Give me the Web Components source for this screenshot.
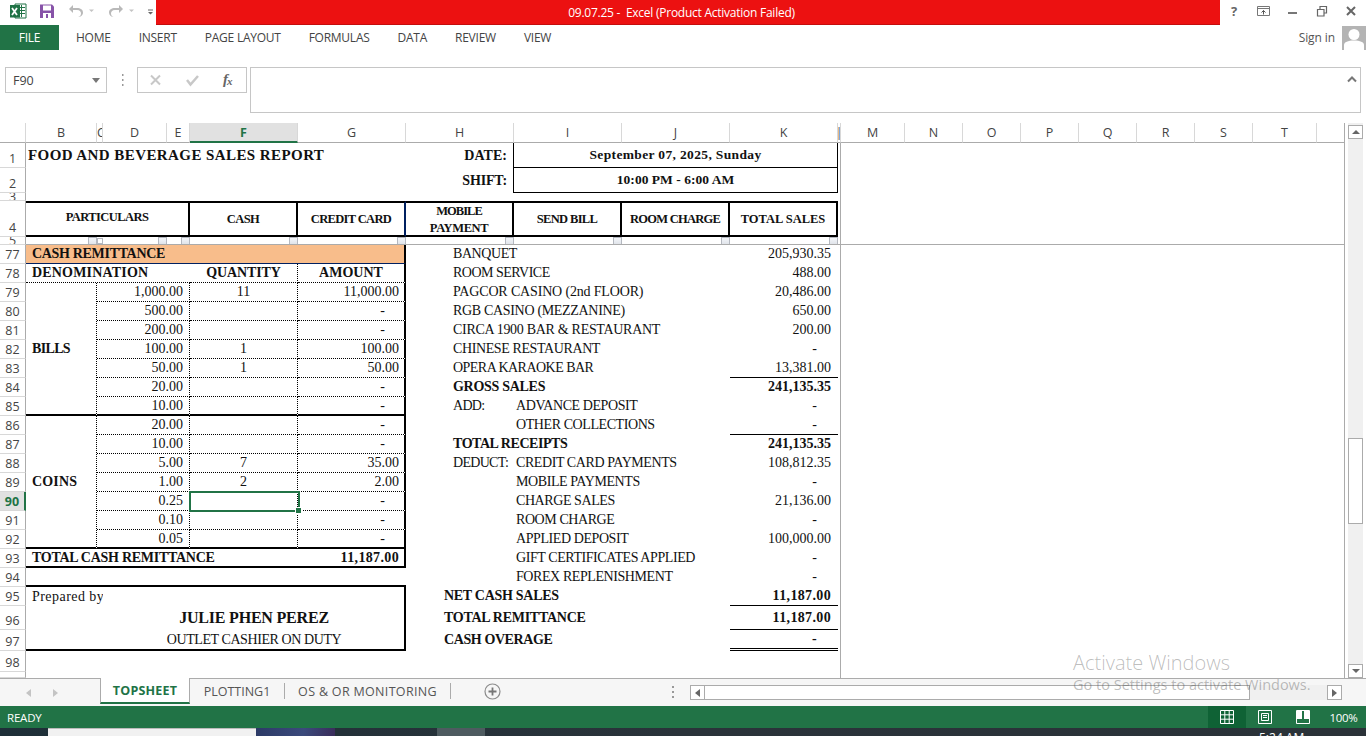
<!DOCTYPE html>
<html>
<head>
<meta charset="utf-8">
<title>09.07.25 - Excel</title>
<style>
  html, body { margin: 0; padding: 0; height: 736px; overflow: hidden; background: #fff; }
  body { display: flex; flex-direction: column; position: relative; font-family: "Open Sans", sans-serif; }
  .sheet-row { display: flex; height: 555px; }
</style>
</head>
<body>
<xl-titlebar title-text="09.07.25 -  Excel (Product Activation Failed)"></xl-titlebar>
<xl-ribbon-tabs></xl-ribbon-tabs>
<xl-formula-bar cell="F90"></xl-formula-bar>
<div class="sheet-row">
  <xl-sheet></xl-sheet>
  <xl-vscroll></xl-vscroll>
</div>
<xl-sheet-tabs></xl-sheet-tabs>
<xl-statusbar></xl-statusbar>
<xl-taskbar></xl-taskbar>
<xl-watermark></xl-watermark>

<script>
const titlebarTemplate = (props) => `
  <style>
    :host { display: flex; height: 25px; flex: none; color: #666; }
    .qat { width: 156px; display: flex; align-items: flex-start; flex: none; }
    .qat svg { display: block; position: relative; }
    .red {
      flex: 1;
      background: #ec1111;
      border-bottom: 1px solid #c40d0d;
      color: #fff;
      font: 12px "Open Sans", sans-serif;
      letter-spacing: -0.25px;
      white-space: pre;
      display: flex;
      align-items: center;
      justify-content: center;
      padding-right: 13px;
    }
    .controls { width: 146px; flex: none; display: flex; }
    .controls svg { display: block; }
  </style>
  <div class="qat">
    <svg width="156" height="25" viewBox="0 0 156 25">
      <path d="M15 4h11v14H15z" fill="#fff" stroke="#217346"/>
      <path d="M19 7.5h6M19 10.500h6M19 13.500h6M21.500 5v12" stroke="#217346" fill="none"/>
      <rect x="10" y="5" width="10" height="12.500" fill="#217346"/>
      <path d="M12 8l5 7M17 8l-5 7" stroke="#fff" stroke-width="1.800" fill="none"/>
      <path d="M40 4.500h12l2 2v11.500H40z" fill="#8753a8"/>
      <rect x="43" y="5.500" width="8" height="5" fill="#fff"/>
      <rect x="43" y="13" width="8" height="5" fill="#fff"/>
      <rect x="46" y="14" width="2" height="4" fill="#8753a8"/>
      <path d="M73 5l-4 4 4 4v-3h4c3 0 4 2 4 3.500 0 2-1.500 3.500-3 3.500 3 0 5-2 5-4.500C83 9.500 80.500 8 77 8h-4z" fill="#b9b9b9"/>
      <path d="M89 9.500h5l-2.500 2.500z" fill="#c4c4c4"/>
      <path d="M119 5l4 4-4 4v-3h-4c-3 0-4 2-4 3.500 0 2 1.500 3.500 3 3.500-3 0-5-2-5-4.500 0-3 2.500-4.500 6-4.500h4z" fill="#b9b9b9"/>
      <path d="M129 9.500h5l-2.500 2.500z" fill="#c4c4c4"/>
      <path d="M148 9.500h5v1h-5zM148 12h5l-2.500 2.500z" fill="#666"/>
    </svg>
  </div>
  <div class="red">${props.titleText}</div>
  <div class="controls">
    <svg width="146" height="25" viewBox="0 0 146 25">
      <text x="11" y="16" font-family="Open Sans, sans-serif" font-weight="700" font-size="13" fill="#666">?</text>
      <path d="M37.500 6.500h12v9h-12zM37.500 8.500h12" fill="none" stroke="#777"/>
      <path d="M43.500 14.500v-4M41.500 12.500l2-2 2 2" fill="none" stroke="#555"/>
      <rect x="68" y="12" width="9" height="2" fill="#777"/>
      <path d="M97.500 9.500h6.500v6.500h-6.500zM100 9V6.500h6.500V13H104" fill="none" stroke="#666" stroke-width="1.200"/>
      <path d="M127 7l8 8M135 7l-8 8" stroke="#666" stroke-width="2" fill="none"/>
    </svg>
  </div>`;

customElements.define(
  "xl-titlebar",
  class XlTitlebar extends HTMLElement {
    constructor() {
      super();
      this.shadow = this.attachShadow({ mode: "open" });
    }
    connectedCallback() {
      this.shadow.innerHTML = titlebarTemplate({ titleText: this.getAttribute("title-text") });
    }
  }
);

customElements.define(
  "xl-ribbon-tabs",
  class XlRibbonTabs extends HTMLElement {
    constructor() {
      super();
      this.attachShadow({ mode: "open" }).innerHTML = `
        <style>
          :host { display: flex; height: 25px; flex: none; align-items: stretch;
                  font: 12px "Open Sans", sans-serif; letter-spacing: -0.25px; color: #444; }
          .file { width: 59px; background: #217346; color: #fff; display: flex; align-items: center; justify-content: center; }
          .tabs { display: flex; gap: 28px; padding-left: 17px; align-items: center; flex: 1; }
          .sign { display: flex; align-items: center; gap: 7px; color: #555; letter-spacing: -0.1px; padding-bottom: 1px; }
          svg { display: block; margin-bottom: -1px; }
        </style>
        <div class="file">FILE</div>
        <div class="tabs">
          <span>HOME</span><span>INSERT</span><span>PAGE LAYOUT</span><span>FORMULAS</span><span>DATA</span><span>REVIEW</span><span>VIEW</span>
        </div>
        <div class="sign">
          <span>Sign in</span>
          <svg width="24" height="24" viewBox="0 0 24 24">
            <rect width="24" height="24" fill="#b4b4b4"/>
            <circle cx="12" cy="8.500" r="5.500" fill="#fff"/>
            <path d="M2 24v-5c0-3 4-4.500 10-4.500s10 1.500 10 4.500v5z" fill="#fff"/>
          </svg>
        </div>`;
    }
  }
);

customElements.define(
  "xl-formula-bar",
  class XlFormulaBar extends HTMLElement {
    constructor() {
      super();
      this.shadow = this.attachShadow({ mode: "open" });
    }
    connectedCallback() {
      this.shadow.innerHTML = `
        <style>
          :host { display: flex; height: 73px; flex: none; box-sizing: border-box; padding: 17px 5px 10px 5px; align-items: flex-start; }
          .box { box-sizing: border-box; border: 1px solid #c6c6c6; background: #fff; }
          .name { width: 102px; height: 26px; display: flex; align-items: center; justify-content: space-between;
                  padding: 0 6px 0 7px; font: 12.500px "Open Sans", sans-serif; color: #444; }
          .caret { width: 0; height: 0; border: 4px solid transparent; border-top: 5px solid #777; border-bottom: 0; }
          .dots { width: 30px; display: flex; justify-content: center; padding-top: 7px; }
          .fx { width: 110px; height: 26px; }
          .fx svg { display: block; }
          .fx text { font-family: "Liberation Serif", serif; font-style: italic; font-weight: 700; font-size: 15px; fill: #666; }
          .input { width: 1111px; height: 46px; margin-left: 3px; position: relative; }
          .input svg { position: absolute; right: 3px; top: 8px; display: block; }
        </style>
        <div class="box name"><span>${this.getAttribute("cell")}</span><i class="caret"></i></div>
        <div class="dots">
          <svg width="3" height="13"><path d="M1 0h1.500v2H1zM1 5h1.500v2H1zM1 10h1.500v2H1z" fill="#999"/></svg>
        </div>
        <div class="box fx">
          <svg width="108" height="24" viewBox="0 0 108 24">
            <path d="M13 7.500l9 9M22 7.500l-9 9" stroke="#c8c8c8" stroke-width="2" fill="none"/>
            <path d="M49 12l3.500 4.500L60 8" stroke="#c8c8c8" stroke-width="2.500" fill="none"/>
            <text x="85" y="16">f</text><text x="89" y="17" style="font-size:11px">x</text>
          </svg>
        </div>
        <div class="box input">
          <svg width="10" height="7" viewBox="0 0 10 7"><path d="M1 5.500l4-4 4 4" stroke="#777" stroke-width="2" fill="none"/></svg>
        </div>`;
    }
  }
);

// column edges of the grid, row header first, then B to U
const COLS = [26, 71, 6, 64, 23, 108, 108, 108, 108, 108, 108, 3, 64, 58, 58, 58, 58, 58, 58, 64, 28];
const COL_NAMES = ["", "B", "C", "D", "E", "F", "G", "H", "I", "J", "K", "", "M", "N", "O", "P", "Q", "R", "S", "T", ""];
const ROWS = [20, 25, 25, 8, 36, 8].concat(Array(19).fill(19), [24, 21, 21, 6]);
const ROW_NAMES = ["", 1, 2, 3, 4, 5];
for (let r = 77; r <= 99; r++) ROW_NAMES.push(r);

// grid line of a sheet row / column letter
const rowLine = (n) => ROW_NAMES.indexOf(n) + 1;
const colLine = (name) => COL_NAMES.indexOf(name) + 1;

const cell = (from, to, row, cls, text = "", rowTo = row) =>
  `<div class="c ${cls}" style="grid-column:${colLine(from)}/${colLine(to) + 1};grid-row:${rowLine(row)}/${rowLine(rowTo) + 1}">${text}</div>`;

// the reference font is wider or narrower per word, so spacing is set per label
const ls = (text, v) => `<span style="letter-spacing:${v}px">${text}</span>`;

function buildCells() {
  let html = "";

  // headers
  COL_NAMES.forEach((name, i) => {
    const sel = name === "F" ? " sel" : "";
    const clip = name === "C" ? " clip" : "";
    let label = name;
    if (i === 11) label = '<span class="l">|</span>';
    html += `<div class="ch${sel}${clip}" style="grid-column:${i + 1}">${label}</div>`;
  });
  ROW_NAMES.slice(1).forEach((name, i) => {
    const sel = name === 90 ? " sel" : "";
    const tiny = name === 3 || name === 5 ? " tiny" : "";
    const label = name === 99 ? "" : name;
    html += `<div class="rh${sel}${tiny}" style="grid-row:${i + 2}"><span>${label}</span></div>`;
  });

  // top block
  html += cell("B", "G", 1, "title", "FOOD AND BEVERAGE SALES REPORT");
  html += cell("H", "H", 1, "bold right lbl", ls("DATE:", 0.05));
  html += cell("H", "H", 2, "bold right lbl", ls("SHIFT:", -0.15));
  html += cell("I", "K", 1, "bold center datebox", "September 07, 2025, Sunday");
  html += cell("I", "K", 2, "bold center datebox", ls("10:00 PM - 6:00 AM", 0.02));

  // table header
  html += cell("B", "E", 4, "th up", ls("PARTICULARS", -0.58));
  html += cell("F", "F", 4, "th", ls("CASH", -0.6));
  html += cell("G", "G", 4, "th navy", ls("CREDIT CARD", -0.65));
  html += cell("H", "H", 4, "th two", `${ls("MOBILE", -0.95)}${ls("PAYMENT", -0.4)}`);
  html += cell("I", "I", 4, "th", ls("SEND BILL", -0.65));
  html += cell("J", "J", 4, "th", ls("ROOM CHARGE", -0.75));
  html += cell("K", "K", 4, "th", ls("TOTAL SALES", 0));

  // little filter boxes under the header
  ["B", "D", "E", "F", "G", "H", "I", "J", "K"].forEach((col) => {
    html += cell(col, col, 5, "flt");
  });
  html += cell("C", "C", 5, "flt small");

  // remittance
  html += cell("B", "G", 77, "bold peach", ls("CASH REMITTANCE", -0.32));
  html += cell("B", "E", 78, "bold head dot", ls("DENOMINATION", 0.18));
  html += cell("F", "F", 78, "bold head center dot vdot", ls("QUANTITY", -0.15));
  html += cell("G", "G", 78, "bold head center dot edge", ls("AMOUNT", 0));
  html += cell("B", "B", 79, "bold merged thick vdot", ls("BILLS", -0.65), 85);
  html += cell("B", "B", 86, "bold merged thick vdot", ls("COINS", 0.15), 92);

  const money = [
    [79, "1,000.00", "11", "11,000.00"], [80, "500.00", "", "-"], [81, "200.00", "", "-"],
    [82, "100.00", "1", "100.00"], [83, "50.00", "1", "50.00"], [84, "20.00", "", "-"],
    [85, "10.00", "", "-"], [86, "20.00", "", "-"], [87, "10.00", "", "-"],
    [88, "5.00", "7", "35.00"], [89, "1.00", "2", "2.00"], [90, "0.25", "", "-"],
    [91, "0.10", "", "-"], [92, "0.05", "", "-"],
  ];
  money.forEach(([row, denom, qty, amt]) => {
    const b = row === 85 || row === 92 ? "thick" : "dot";
    const dash = amt === "-" ? " dash" : "";
    html += cell("C", "E", row, `right vdot ${b}`, denom);
    html += cell("F", "F", row, `center vdot ${b}`, qty);
    html += cell("G", "G", row, `right edge ${b}${dash}`, amt);
  });
  html += cell("F", "F", 90, "cursor");

  html += cell("B", "F", 93, "bold thick tot", ls("TOTAL CASH REMITTANCE", -0.27));
  html += cell("G", "G", 93, "bold right edge thick", "11,187.00");
  html += cell("B", "G", 94, "thick");
  html += cell("B", "G", 95, "edge prep", "<span>Prepared by</span>");
  html += cell("B", "G", 96, "edge center name", "JULIE PHEN PEREZ");
  html += cell("B", "G", 97, "edge center thick outlet", "OUTLET CASHIER ON DUTY");

  // right hand summary: [row, label, value, extra class]
  const summary = [
    [77, ls("BANQUET", -0.42), "205,930.35"], [78, ls("ROOM SERVICE", -0.5), "488.00"],
    [79, ls("PAGCOR CASINO (2nd FLOOR)", -0.16), "20,486.00"],
    [80, ls("RGB CASINO (MEZZANINE)", -0.32), "650.00"], [81, ls("CIRCA 1900 BAR &amp; RESTAURANT", -0.3), "200.00"],
    [82, ls("CHINESE RESTAURANT", -0.39), "-"], [83, ls("OPERA KARAOKE BAR", -0.53), "13,381.00", "line"],
    [84, `<b style="letter-spacing:-0.29px">GROSS SALES</b>`, "<b>241,135.35</b>"],
    [86, "", "-", "line"],
    [87, `<b style="letter-spacing:-0.44px">TOTAL RECEIPTS</b>`, "<b>241,135.35</b>"],
  ];
  summary.forEach(([row, label, val, cls = ""]) => {
    if (label) html += cell("H", "J", row, "sum", label);
    html += cell("K", "K", row, `right val ${cls}${val === "-" ? " dash" : ""}`, val);
  });

  html += cell("H", "H", 85, "sum", ls("ADD:", -0.7));
  html += cell("K", "K", 85, "right val dash", "-");
  html += cell("H", "H", 88, "sum", ls("DEDUCT:", -0.7));

  const sub = [
    [85, "ADVANCE DEPOSIT"], [86, "OTHER COLLECTIONS"], [88, "CREDIT CARD PAYMENTS", "108,812.35"],
    [89, "MOBILE PAYMENTS", "-"], [90, "CHARGE SALES", "21,136.00"], [91, "ROOM CHARGE", "-"],
    [92, "APPLIED DEPOSIT", "100,000.00"], [93, "GIFT CERTIFICATES APPLIED", "-"], [94, "FOREX REPLENISHMENT", "-"],
  ];
  sub.forEach(([row, label, val]) => {
    html += cell("I", "J", row, "sub", label);
    if (val) html += cell("K", "K", row, `right val${val === "-" ? " dash" : ""}`, val);
  });

  html += cell("H", "J", 95, "net bold", ls("NET CASH SALES", -0.29));
  html += cell("K", "K", 95, "right val bold line", "11,187.00");
  html += cell("H", "J", 96, "net bold", ls("TOTAL REMITTANCE", -0.27));
  html += cell("K", "K", 96, "right val bold line", "11,187.00");
  html += cell("H", "J", 97, "net bold", ls("CASH OVERAGE", -0.4));
  html += cell("K", "K", 97, "right val bold dbl dash", "-");

  // freeze pane lines
  html += `<div class="freeze-v" style="grid-column:${colLine("K") + 1};grid-row:2/-1"></div>`;
  html += `<div class="freeze-h" style="grid-column:2/-1;grid-row:6"></div>`;
  return html;
}

customElements.define(
  "xl-sheet",
  class XlSheet extends HTMLElement {
    constructor() {
      super();
      this.attachShadow({ mode: "open" }).innerHTML = `
        <style>
          :host { display: block; width: 1345px; height: 555px; flex: none; overflow: hidden; box-sizing: border-box; border-right: 1px solid #ababab; }
          .grid {
            display: grid;
            grid-template-columns: ${COLS.map((w) => w + "px").join(" ")};
            grid-template-rows: ${ROWS.map((h) => h + "px").join(" ")};
            font: 14px "Liberation Serif", serif;
            color: #111;
          }
          .ch {
            grid-row: 1; box-sizing: border-box; border-right: 1px solid #d8d8d8; border-bottom: 1px solid #ababab;
            display: flex; align-items: center; justify-content: center; overflow: hidden;
            font: 12.500px "Open Sans", sans-serif; color: #444;
          }
          .ch.clip { justify-content: flex-start; }
          .ch.sel { background: #e1e1e1; border-bottom: 2px solid #217346; color: #217346; font-weight: 700; }
          .ch .l { color: #444; font-size: 12px; }
          .rh {
            grid-column: 1; box-sizing: border-box; border-right: 1px solid #ababab; border-bottom: 1px solid #d8d8d8;
            display: flex; align-items: flex-end; justify-content: center; overflow: hidden;
            font: 12.500px "Open Sans", sans-serif; color: #444; line-height: 17px;
          }
          .rh.tiny { line-height: 7px; }
          .rh.sel { background: #e1e1e1; color: #217346; font-weight: 700; border-right: 2px solid #217346; }
          .c { box-sizing: border-box; display: flex; align-items: center; min-width: 0; white-space: nowrap; padding: 0 6px; }
          .bold { font-weight: 700; letter-spacing: 0.35px; }
          .right { justify-content: flex-end; }
          .center { justify-content: center; }
          .title { font-weight: 700; font-size: 15px; padding-left: 2px; letter-spacing: 0.42px; padding-bottom: 1px; }
          .lbl { padding-right: 7px; }
          .datebox { border: solid #000; border-width: 0 1px 1px 1px; font-size: 13.500px; padding-bottom: 1px; margin-left: -1px; }
          .th { grid-row: 5; border: solid #000; border-width: 2px 2px 2px 0; justify-content: center; font-weight: 700; font-size: 12.500px; padding: 0; }
          .th.up { padding-bottom: 4px; }
          .th.navy { border-right-color: #002060; }
          .th.two { flex-direction: column; justify-content: space-between; align-items: center; line-height: 17px; }
          .flt { justify-self: end; width: 9px; padding: 0; border: 1px solid #b4b8c0; background: linear-gradient(#f4f6fa, #e0e4ea); height: 8px; }
          .flt.small { background: #fff; width: 6px; height: 6px; align-self: end; margin-bottom: 1px; justify-self: start; }
          .peach { background: #f8bd8b; border-bottom: 1px solid #002060; border-right: 2px solid #000; }
          .dot { border-bottom: 1px dotted #000; }
          .vdot { border-right: 1px dotted #000; }
          .edge { border-right: 2px solid #000; }
          .thick { border-bottom: 2px solid #000; }
          .prep span { display: block; width: 71px; overflow: hidden; letter-spacing: 0.45px; }
          .name { font-weight: 700; font-size: 16px; padding: 0 0 0 78px; letter-spacing: -0.2px; }
          .outlet { padding: 0 0 0 78px; letter-spacing: -0.42px; }
          .edge.right { padding-right: 5px; }
          .edge.right.dash { padding-right: 19px; }
          .cursor { border: 2px solid #217346; margin: -1px -2px -1px -1px; position: relative; padding: 0; z-index: 2; }
          .cursor::after { content: ""; position: absolute; right: -3px; bottom: -3px; background: #217346; box-shadow: 0 0 0 1px #fff; width: 5px; height: 5px; }
          .sum { padding-left: 47px; padding-bottom: 1px; letter-spacing: -0.42px; }
          .sub { padding-left: 2px; padding-bottom: 1px; letter-spacing: -0.42px; }
          .net { padding-left: 38px; padding-bottom: 1px; }
          .val { padding-right: 7px; padding-bottom: 1px; }
          .val.line { padding-bottom: 0; }
          .val.dash { padding-right: 21px; }
          .line { border-bottom: 1px solid #000; }
          .dbl { border-bottom: 3px double #000; padding-bottom: 0; }
          .freeze-v { border-right: 1px solid #ababab; }
          .freeze-h { border-bottom: 1px solid #ababab; }
        </style>
        <div class="grid">${buildCells()}</div>`;
    }
  }
);

customElements.define(
  "xl-vscroll",
  class XlVscroll extends HTMLElement {
    constructor() {
      super();
      this.attachShadow({ mode: "open" }).innerHTML = `
        <style>
          :host { display: flex; flex-direction: column; width: 15px; height: 555px; margin-left: 3px; flex: none; background: #f0f0f0; }
          .btn { height: 14px; flex: none; box-sizing: border-box; border: 1px solid #ababab; background: #fff; display: flex; align-items: center; justify-content: center; }
          .top { margin-top: 2px; }
          .track { height: 299px; flex: none; }
          .thumb { height: 86px; flex: none; box-sizing: border-box; border: 1px solid #ababab; background: #fff; }
          .rest { flex: 1; }
          i { width: 0; height: 0; border: 4px solid transparent; }
          .up i { border-bottom: 4px solid #666; border-top: 0; }
          .down i { border-top: 4px solid #666; border-bottom: 0; }
        </style>
        <div class="btn top up"><i></i></div>
        <div class="track"></div>
        <div class="thumb"></div>
        <div class="rest"></div>
        <div class="btn down"><i></i></div>`;
    }
  }
);

customElements.define(
  "xl-sheet-tabs",
  class XlSheetTabs extends HTMLElement {
    constructor() {
      super();
      this.attachShadow({ mode: "open" }).innerHTML = `
        <style>
          :host { display: flex; height: 28px; flex: none; box-sizing: border-box; background: #f6f6f6; border-top: 1px solid #ababab;
                  font: 12.500px "Open Sans", sans-serif; color: #555; align-items: stretch; }
          .nav { width: 100px; display: flex; gap: 22px; align-items: center; padding-left: 26px; box-sizing: border-box; flex: none; }
          .nav i { width: 0; height: 0; border: 4px solid transparent; }
          .nav i:first-child { border-right: 5px solid #c4c4c4; border-left: 0; }
          .nav i:last-child { border-left: 5px solid #c4c4c4; border-right: 0; }
          .active { width: 90px; flex: none; box-sizing: border-box; background: #fff; border: solid #ababab; border-width: 0 1px; margin-top: -1px;
                    border-bottom: 2px solid #217346; margin-bottom: 2px; color: #217346; font-weight: 700; letter-spacing: 0.2px; display: flex; align-items: center; justify-content: center; }
          .tab { display: flex; align-items: center; justify-content: center; box-sizing: border-box; flex: none; border-right: 1px solid #ababab; margin: 4px 0 7px; }
          .t1 { width: 95px; }
          .t2 { width: 166px; letter-spacing: 0.32px; }
          .plus { width: 83px; flex: none; display: flex; align-items: center; justify-content: center; padding-bottom: 2px; box-sizing: border-box; }
          .dots { width: 156px; flex: none; display: flex; align-items: center; justify-content: flex-end; padding-right: 15px; box-sizing: border-box; padding-bottom: 2px; }
          .hbar { display: flex; flex: none; width: 652px; height: 15px; margin-top: 6px; }
          .hbtn { width: 15px; box-sizing: border-box; border: 1px solid #ababab; background: #fff; display: flex; align-items: center; justify-content: center; flex: none; }
          .hbtn i { width: 0; height: 0; border: 4px solid transparent; }
          .l i { border-right: 5px solid #666; border-left: 0; }
          .r i { border-left: 5px solid #666; border-right: 0; }
          .thumb { width: 545px; flex: none; box-sizing: border-box; border: 1px solid #ababab; border-left: 0; background: #fff; }
          .hrest { width: 77px; flex: none; background: #f0f0f0; }
          svg { display: block; }
        </style>
        <div class="nav"><i></i><i></i></div>
        <div class="active">TOPSHEET</div>
        <div class="tab t1">PLOTTING1</div>
        <div class="tab t2">OS &amp; OR MONITORING</div>
        <div class="plus">
          <svg width="17" height="17" viewBox="0 0 17 17">
            <circle cx="8.500" cy="8.500" r="7.500" fill="none" stroke="#8c8c8c" stroke-width="1.200"/>
            <path d="M8.500 4.500v8M4.500 8.500h8" stroke="#777" stroke-width="1.800"/>
          </svg>
        </div>
        <div class="dots"><svg width="3" height="13"><path d="M0 1h2v2H0zM0 6h2v2H0zM0 11h2v2H0z" fill="#999"/></svg></div>
        <div class="hbar">
          <div class="hbtn l"><i></i></div>
          <div class="thumb"></div>
          <div class="hrest"></div>
          <div class="hbtn r"><i></i></div>
        </div>`;
    }
  }
);

customElements.define(
  "xl-statusbar",
  class XlStatusbar extends HTMLElement {
    constructor() {
      super();
      this.attachShadow({ mode: "open" }).innerHTML = `
        <style>
          :host { display: flex; height: 22px; flex: none; background: #217346; color: #fff; align-items: stretch;
                  font: 11.500px "Open Sans", sans-serif; }
          .ready { flex: 1; padding-left: 7px; display: flex; align-items: center; letter-spacing: -0.2px; }
          .view { width: 38px; flex: none; display: flex; align-items: center; justify-content: center; }
          .view.on { background: #0f6235; }
          .zoom { width: 44px; flex: none; display: flex; align-items: center; justify-content: center; box-sizing: border-box; padding-right: 1px; letter-spacing: -0.3px; }
          svg { display: block; }
        </style>
        <div class="ready">READY</div>
        <div class="view on">
          <svg width="14" height="14" viewBox="0 0 14 14"><path d="M.5.5h13v13H.5zM.5 4.800h13M.5 9.200h13M4.800.5v13M9.200.5v13" fill="none" stroke="#fff"/></svg>
        </div>
        <div class="view">
          <svg width="14" height="14" viewBox="0 0 14 14"><path d="M.5.500h13v13H.5z" fill="none" stroke="#fff"/><path d="M3.500 3.500h7v7h-7zM5 5.500h4M5 7.500h4" fill="none" stroke="#fff"/></svg>
        </div>
        <div class="view">
          <svg width="14" height="14" viewBox="0 0 14 14"><path d="M.5.500h13v13H.5z" fill="none" stroke="#fff"/><path d="M1 1h5v8H1zM8 1h5v8H8z" fill="#fff"/></svg>
        </div>
        <div class="zoom">100%</div>`;
    }
  }
);

customElements.define(
  "xl-taskbar",
  class XlTaskbar extends HTMLElement {
    constructor() {
      super();
      this.attachShadow({ mode: "open" }).innerHTML = `
        <style>
          :host { display: flex; height: 8px; flex: none; overflow: hidden; background: linear-gradient(90deg, #1e2f38, #2a333a 50%, #2a3238); color: #fff; }
          .search { width: 208px; margin-left: 48px; background: #f1f1f1; box-sizing: border-box; border-top: 1px solid #bbb; flex: none; }
          .thumb { width: 79px; flex: none; background: linear-gradient(100deg, #2c3a66, #3b4a7c 60%, #3a2c5a); }
          .active { width: 48px; margin-left: 102px; background: #4e5b60; flex: none; }
          .clock { font: 12px "Open Sans", sans-serif; margin-left: 774px; line-height: 14px; padding-top: 3px; white-space: nowrap; }
        </style>
        <div class="search"></div>
        <div class="thumb"></div>
        <div class="active"></div>
        <div class="clock">5:24 AM</div>`;
    }
  }
);

customElements.define(
  "xl-watermark",
  class XlWatermark extends HTMLElement {
    constructor() {
      super();
      this.attachShadow({ mode: "open" }).innerHTML = `
        <style>
          :host { display: block; position: absolute; left: 1073px; top: 650px; color: rgba(70, 70, 70, 0.36); font-family: "Open Sans", sans-serif; white-space: nowrap; pointer-events: none; }
          .a { font-size: 20px; font-weight: 300; line-height: 25px; }
          .b { font-size: 14.500px; line-height: 18px; margin-top: 1px; }
        </style>
        <div class="a">Activate Windows</div>
        <div class="b">Go to Settings to activate Windows.</div>`;
    }
  }
);
</script>
</body>
</html>
